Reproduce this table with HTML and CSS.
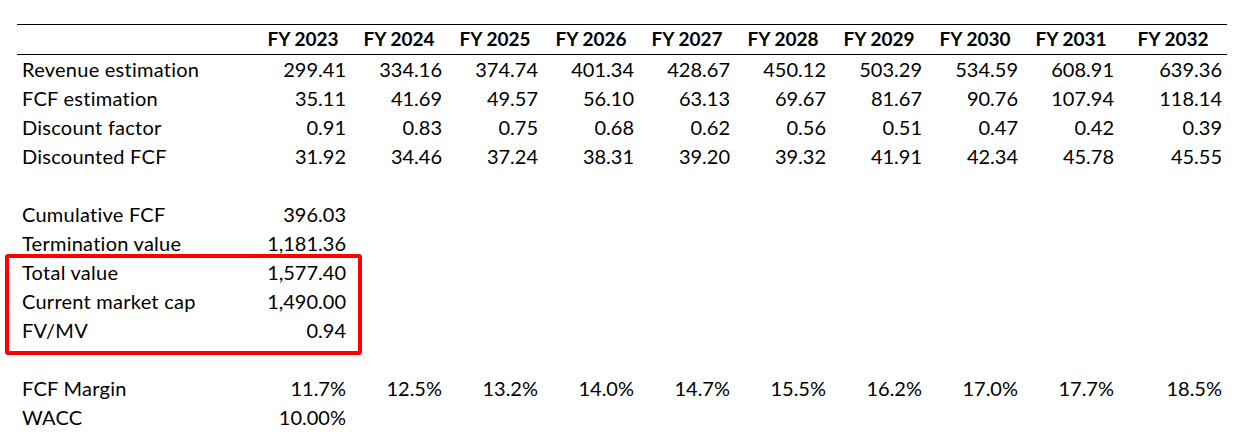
FILE: index.html
```html
<!DOCTYPE html>
<html lang="en">
<head>
<meta charset="utf-8">
<title>DCF valuation</title>
<link rel="stylesheet" href="styles.css">
</head>
<body>
<div class="sheet">
  <table class="dcf">
    <colgroup>
      <col class="c-label">
      <col class="c-num"><col class="c-num"><col class="c-num"><col class="c-num"><col class="c-num">
      <col class="c-num"><col class="c-num"><col class="c-num"><col class="c-num">
      <col class="c-last">
    </colgroup>
    <thead>
      <tr class="head">
        <th></th>
        <th>FY 2023</th><th>FY 2024</th><th>FY 2025</th><th>FY 2026</th><th>FY 2027</th>
        <th>FY 2028</th><th>FY 2029</th><th>FY 2030</th><th>FY 2031</th><th>FY 2032</th>
      </tr>
    </thead>
    <tbody>
      <tr><td>Revenue estimation</td><td>299.41</td><td>334.16</td><td>374.74</td><td>401.34</td><td>428.67</td><td>450.12</td><td>503.29</td><td>534.59</td><td>608.91</td><td>639.36</td></tr>
      <tr><td>FCF estimation</td><td>35.11</td><td>41.69</td><td>49.57</td><td>56.10</td><td>63.13</td><td>69.67</td><td>81.67</td><td>90.76</td><td>107.94</td><td>118.14</td></tr>
      <tr><td>Discount factor</td><td>0.91</td><td>0.83</td><td>0.75</td><td>0.68</td><td>0.62</td><td>0.56</td><td>0.51</td><td>0.47</td><td>0.42</td><td>0.39</td></tr>
      <tr><td>Discounted FCF</td><td>31.92</td><td>34.46</td><td>37.24</td><td>38.31</td><td>39.20</td><td>39.32</td><td>41.91</td><td>42.34</td><td>45.78</td><td>45.55</td></tr>
      <tr class="blank"><td colspan="11"></td></tr>
      <tr><td>Cumulative FCF</td><td>396.03</td><td colspan="9"></td></tr>
      <tr><td>Termination value</td><td>1,181.36</td><td colspan="9"></td></tr>
      <tr><td>Total value</td><td>1,577.40</td><td colspan="9"></td></tr>
      <tr><td>Current market cap</td><td>1,490.00</td><td colspan="9"></td></tr>
      <tr><td>FV/MV</td><td>0.94</td><td colspan="9"></td></tr>
      <tr class="blank"><td colspan="11"></td></tr>
      <tr><td>FCF Margin</td><td>11.7%</td><td>12.5%</td><td>13.2%</td><td>14.0%</td><td>14.7%</td><td>15.5%</td><td>16.2%</td><td>17.0%</td><td>17.7%</td><td>18.5%</td></tr>
      <tr><td>WACC</td><td>10.00%</td><td colspan="9"></td></tr>
    </tbody>
  </table>
  <div class="highlight"></div>
</div>
</body>
</html>
```

FILE: styles.css
```css
html, body {
  margin: 0;
  padding: 0;
  background: #ffffff;
}

body {
  font-family: "Lato", "Liberation Sans", sans-serif;
  color: #000000;
}

.sheet {
  position: relative;
  padding: 24px 0 0 17px;
}

.dcf {
  table-layout: fixed;
  width: 1210px;
  border-collapse: collapse;
  font-size: 20px;
}

.c-label { width: 238px; }
.c-num { width: 96px; }
.c-last { width: 108px; }

.dcf th,
.dcf td {
  box-sizing: border-box;
  height: 29px;
  padding: 0 5px 1px 5px;
  line-height: 28px;
  white-space: nowrap;
  text-align: right;
  font-weight: 400;
}

.dcf td:first-child {
  text-align: left;
  letter-spacing: 0.25px;
}

.dcf .head th {
  text-align: center;
  font-size: 19px;
  font-weight: 700;
  border-top: 1px solid #000000;
  border-bottom: 1px solid #000000;
  height: 29px;
}

.highlight {
  position: absolute;
  left: 5px;
  top: 254px;
  width: 349px;
  height: 93px;
  border: 4px solid #ff0000;
  border-radius: 3px;
}
```
